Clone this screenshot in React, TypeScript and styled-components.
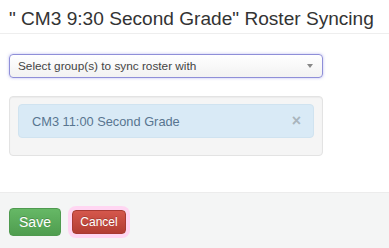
import styled, { createGlobalStyle } from "styled-components";

const GlobalStyles = createGlobalStyle`
  * { box-sizing: border-box; margin: 0; padding: 0; }
  body {
    background: #fff;
    font-family: "Liberation Sans", Arial, sans-serif;
    color: #333;
    width: 389px;
    height: 248px;
    overflow: hidden;
  }
`;

const Modal = styled.div`
  display: flex;
  flex-direction: column;
  height: 248px;
`;

const Header = styled.div`
  padding: 8px 9px 0;
  height: 34px;
  border-bottom: 1px solid #eee;
`;

const Title = styled.h3`
  font-size: 19.1px;
  font-weight: normal;
  line-height: 22px;
  color: #333;
  white-space: nowrap;
`;

const Body = styled.div`
  flex: 1;
  padding: 20px 9px 0;
  display: flex;
  flex-direction: column;
  gap: 18px;
`;

const Select = styled.div`
  width: 314px;
  height: 24px;
  border: 1px solid #8f8fd8;
  border-radius: 4px;
  box-shadow: 0 0 3px rgba(120, 120, 230, 0.5);
  background: linear-gradient(#fff, #f2f2f2);
  display: flex;
  align-items: center;
  justify-content: space-between;
  padding: 0 9px 0 8px;
  font-size: 11.8px;
  color: #444;
`;

const Caret = styled.span`
  width: 0;
  height: 0;
  border-left: 3px solid transparent;
  border-right: 3px solid transparent;
  border-top: 4px solid #888;
`;

const Well = styled.div`
  width: 314px;
  height: 60px;
  background: #f5f5f5;
  border: 1px solid #e3e3e3;
  border-radius: 4px;
  box-shadow: inset 0 1px 1px rgba(0, 0, 0, 0.04);
  padding: 7px 8px 0 8px;
`;

const Alert = styled.div`
  height: 34px;
  background: #d9eaf6;
  border: 1px solid #d0e3f0;
  border-radius: 4px;
  color: #587590;
  font-size: 12.8px;
  display: flex;
  align-items: center;
  justify-content: space-between;
  padding: 0 12px 0 13px;
`;

const Close = styled.span`
  color: #a9b5bd;
  font-size: 16px;
  font-weight: bold;
  line-height: 1;
`;

const Footer = styled.div`
  height: 56px;
  background: #f4f5f5;
  border-top: 1px solid #ececec;
  display: flex;
  align-items: center;
  padding: 0 9px;
  gap: 11px;
`;

const Button = styled.button<{ $variant: "success" | "danger"; $big?: boolean }>`
  border-radius: 4px;
  font-family: "Liberation Sans", Arial, sans-serif;
  color: #fff;
  cursor: pointer;
  text-shadow: 0 -1px 0 rgba(0, 0, 0, 0.2);
  border: 1px solid ${(p) => (p.$variant === "success" ? "#4f9a4f" : "#a83a33")};
  background: ${(p) =>
    p.$variant === "success"
      ? "linear-gradient(#66b866, #4f9d4f)"
      : "linear-gradient(#d5574c, #b23d33)"};
  font-size: ${(p) => (p.$big ? "14px" : "12px")};
  width: ${(p) => (p.$big ? "52px" : "54px")};
  height: ${(p) => (p.$big ? "28px" : "24px")};
  margin-top: ${(p) => (p.$big ? "2px" : "3px")};
  box-shadow: ${(p) => (p.$variant === "danger" ? "0 0 0 4px #ffd6f2" : "none")};
`;

export default function App() {
  return (
    <Modal>
      <GlobalStyles />
      <Header>
        <Title>" CM3 9:30 Second Grade" Roster Syncing</Title>
      </Header>
      <Body>
        <Select>
          <span>Select group(s) to sync roster with</span>
          <Caret />
        </Select>
        <Well>
          <Alert>
            <span>CM3 11:00 Second Grade</span>
            <Close>×</Close>
          </Alert>
        </Well>
      </Body>
      <Footer>
        <Button $variant="success" $big>
          Save
        </Button>
        <Button $variant="danger">Cancel</Button>
      </Footer>
    </Modal>
  );
}
